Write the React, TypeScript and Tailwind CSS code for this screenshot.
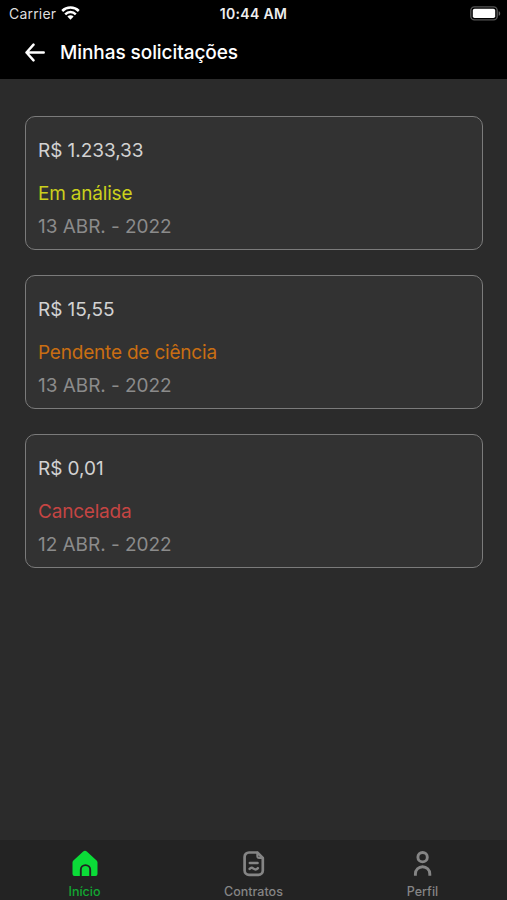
import React from 'react';

interface Request {
  amount: string;
  status: string;
  statusColor: string;
  date: string;
}

const requests: Request[] = [
  { amount: 'R$ 1.233,33', status: 'Em análise', statusColor: 'text-[#cbd01c]', date: '13 ABR. - 2022' },
  { amount: 'R$ 15,55', status: 'Pendente de ciência', statusColor: 'text-[#c96e12]', date: '13 ABR. - 2022' },
  { amount: 'R$ 0,01', status: 'Cancelada', statusColor: 'text-[#c54543]', date: '12 ABR. - 2022' },
];

function StatusBar() {
  return (
    <div className="grid h-[27px] grid-cols-3 items-center text-white">
      <div className="flex items-center gap-[5px] pl-[9px]">
        <span className="text-[14px] leading-none tracking-[0.2px] text-[#dedede]">Carrier</span>
        <svg width="19" height="15" viewBox="0 0 19 15" fill="none" stroke="#fff" strokeWidth="2.5">
          <path d="M1.2 5a11.8 11.8 0 0 1 16.6 0" />
          <path d="M4.2 8.3a7.5 7.5 0 0 1 10.6 0" />
          <path d="M9.5 13.8 6.4 10.6a4.4 4.4 0 0 1 6.2 0z" fill="#fff" stroke="none" />
        </svg>
      </div>
      <div className="text-center text-[14px] leading-none font-semibold tracking-[0.3px] text-[#eee]">10:44 AM</div>
      <div className="flex justify-end pr-[6px]">
        <svg width="31" height="15" viewBox="0 0 31 15" fill="none">
          <rect x="0.8" y="0.9" width="26.4" height="13" rx="3.6" stroke="#555" strokeWidth="1.4" />
          <rect x="2.8" y="2.8" width="22.4" height="9.2" rx="1.8" fill="#fff" />
          <path d="M28.7 5.2c2 .7 2 3.9 0 4.6z" fill="#666" />
        </svg>
      </div>
    </div>
  );
}

function RequestCard({ request }: { request: Request }) {
  return (
    <div className="h-[134px] rounded-[10px] border border-[#7b7b7b] bg-[#323232] pt-[19px] pl-3 text-[19px] leading-[30px]">
      <div className="tracking-[-0.05px] text-[#d2d2d2]">{request.amount}</div>
      <div className={`mt-[13px] tracking-[-0.2px] ${request.statusColor}`}>{request.status}</div>
      <div className="mt-[3px] tracking-[-0.04px] text-[#8b8b8b]">{request.date}</div>
    </div>
  );
}

function HomeIcon() {
  return (
    <svg width="28" height="28" viewBox="0 0 28 28">
      <path
        d="M12.2 1.6a2.6 2.6 0 0 1 3.6 0l9.8 8.8c.6.6.9 1.2.9 2V24a2 2 0 0 1-2 2h-21a2 2 0 0 1-2-2V12.4c0-.8.3-1.4.9-2z"
        fill="#0bdc38"
      />
      <path d="M9.8 26v-6.2a4.7 4.7 0 0 1 9.4 0V26" fill="none" stroke="#232323" strokeWidth="1.9" />
    </svg>
  );
}

function ContractIcon() {
  return (
    <svg width="28" height="28" viewBox="0 0 28 28" fill="none" stroke="#858585" strokeWidth="2.7" strokeLinecap="round" strokeLinejoin="round">
      <path d="M17.3 2.5H9a4.4 4.4 0 0 0-4.4 4.4v13.6A4.4 4.4 0 0 0 9 24.9h9.4a4.4 4.4 0 0 0 4.4-4.4V8z" />
      <path d="M17.3 2.5v3.6A1.9 1.9 0 0 0 19.2 8h3.6" strokeWidth="2" />
      <path d="M9.8 13h7.8" strokeWidth="2.4" />
      <path d="M9.6 18.9c1.2-1.4 2.5-1.4 3.9-.3s3 1.1 4.4-.5" strokeWidth="2.4" />
    </svg>
  );
}

function ProfileIcon() {
  return (
    <svg width="28" height="28" viewBox="0 0 28 28" fill="none" stroke="#858585" strokeWidth="2.9">
      <circle cx="13.6" cy="7.2" r="4.7" />
      <path d="M6.4 25.7v-1.8a7.2 7.2 0 0 1 14.4 0v1.8" />
    </svg>
  );
}

const tabs = [
  { label: 'Início', icon: <HomeIcon />, color: 'text-[#12a832]' },
  { label: 'Contratos', icon: <ContractIcon />, color: 'text-[#858585]' },
  { label: 'Perfil', icon: <ProfileIcon />, color: 'text-[#858585]' },
];

export default function App() {
  return (
    <div className="flex h-[900px] w-full flex-col overflow-hidden bg-[#2b2b2b] font-['Inter',sans-serif]">
      <header className="h-[79px] bg-black">
        <StatusBar />
        <div className="flex h-[52px] items-center gap-[14px] pl-[25px] text-white">
          <svg width="21" height="20" viewBox="0 0 21 20" fill="none" stroke="currentColor" strokeWidth="2.5" strokeLinecap="round" strokeLinejoin="round">
            <path d="M18.7 9.5H1.5M8.5 1.7 1.5 9.5l7 7.8" />
          </svg>
          <h1 className="text-[19px] font-medium tracking-[-0.07px]">Minhas solicitações</h1>
        </div>
      </header>
      <main className="flex flex-1 flex-col gap-[24.9px] pt-[37px] pr-[24px] pl-[25px]">
        {requests.map(r => (
          <RequestCard key={r.amount} request={r} />
        ))}
      </main>
      <nav className="grid h-[60px] grid-cols-3 bg-[#232323]">
        {tabs.map(tab => (
          <button key={tab.label} className={`flex flex-col items-center pt-[10px] ${tab.color}`}>
            {tab.icon}
            <span className="mt-[6px] text-[12.5px] leading-4 font-medium">{tab.label}</span>
          </button>
        ))}
      </nav>
    </div>
  );
}
